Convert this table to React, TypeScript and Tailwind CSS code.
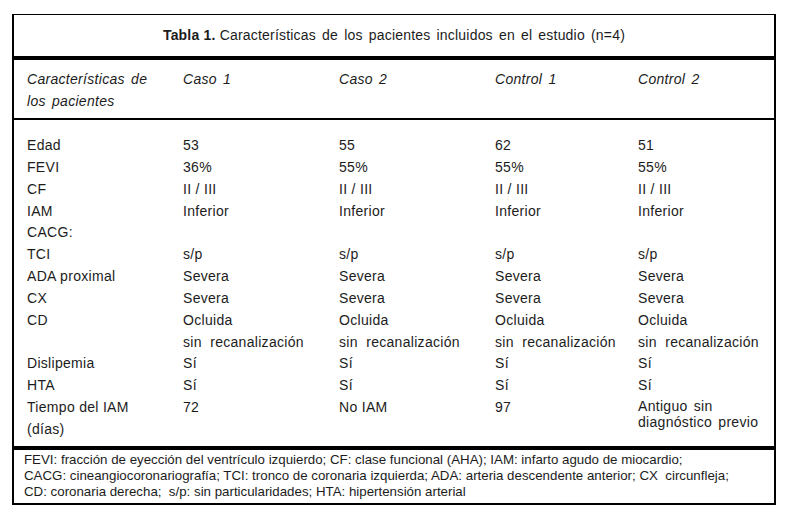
import React from 'react';

const rows: { label: string; cells: string[] }[] = [
  { label: 'Edad', cells: ['53', '55', '62', '51'] },
  { label: 'FEVI', cells: ['36%', '55%', '55%', '55%'] },
  { label: 'CF', cells: ['II / III', 'II / III', 'II / III', 'II / III'] },
  { label: 'IAM', cells: ['Inferior', 'Inferior', 'Inferior', 'Inferior'] },
  { label: 'CACG:', cells: ['', '', '', ''] },
  { label: 'TCI', cells: ['s/p', 's/p', 's/p', 's/p'] },
  { label: 'ADA proximal', cells: ['Severa', 'Severa', 'Severa', 'Severa'] },
  { label: 'CX', cells: ['Severa', 'Severa', 'Severa', 'Severa'] },
  { label: 'CD', cells: ['Ocluida', 'Ocluida', 'Ocluida', 'Ocluida'] },
  { label: '', cells: ['sin  recanalización', 'sin  recanalización', 'sin  recanalización', 'sin  recanalización'] },
  { label: 'Dislipemia', cells: ['Sí', 'Sí', 'Sí', 'Sí'] },
  { label: 'HTA', cells: ['Sí', 'Sí', 'Sí', 'Sí'] },
];

const grid = 'grid grid-cols-[156px_156px_156px_143px_1fr]';

export default function App() {
  return (
    <div className="w-[792px] h-[519px] bg-white pt-[14px] pl-[12px] font-['Liberation_Sans',Arial,sans-serif] text-[#1c1c1c]">
      <div className="w-[764px] border-t border-l-2 border-r-2 border-b-2 border-black">
        <div className="h-[41px] flex items-center justify-center text-[14px] tracking-[0.2px]">
          <span className="font-bold mr-[4px]">Tabla 1.</span>
          <span className="[word-spacing:2px]">Características de los pacientes incluidos en el estudio (n=4)</span>
        </div>

        <div className={`${grid} border-t-4 border-black pl-[13px] pt-[8px] h-[62px] italic text-[14px] leading-[22px] tracking-[0.3px] [word-spacing:2px]`}>
          <div>Características de<br />los pacientes</div>
          <div>Caso 1</div>
          <div>Caso 2</div>
          <div>Control 1</div>
          <div>Control 2</div>
        </div>

        <div className="border-t-2 border-black pl-[13px] pt-[15px] pb-[5px] text-[14px] leading-[21.85px] tracking-[0.3px]">
          {rows.map((r, i) => (
            <div key={i} className={grid}>
              <div>{r.label}</div>
              {r.cells.map((c, j) => (
                <div key={j} className="whitespace-pre">{c}</div>
              ))}
            </div>
          ))}
          <div className={grid}>
            <div>Tiempo del IAM<br />(días)</div>
            <div>72</div>
            <div>No IAM</div>
            <div>97</div>
            <div className="leading-[16px] pt-[1px] [word-spacing:2px]">Antiguo sin<br />diagnóstico previo</div>
          </div>
        </div>

        <div className="border-t-4 border-black pl-[10px] pt-[2px] pb-[3px] font-['Liberation_Sans_Narrow','Liberation_Sans',Arial,sans-serif] text-[13.3px] leading-[16px]">
          <div>FEVI: fracción de eyección del ventrículo izquierdo; CF: clase funcional (AHA); IAM: infarto agudo de miocardio;</div>
          <div className="whitespace-pre">CACG: cineangiocoronariografía; TCI: tronco de coronaria izquierda; ADA: arteria descendente anterior; CX  circunfleja;</div>
          <div className="whitespace-pre">CD: coronaria derecha;  s/p: sin particularidades; HTA: hipertensión arterial</div>
        </div>
      </div>
    </div>
  );
}
